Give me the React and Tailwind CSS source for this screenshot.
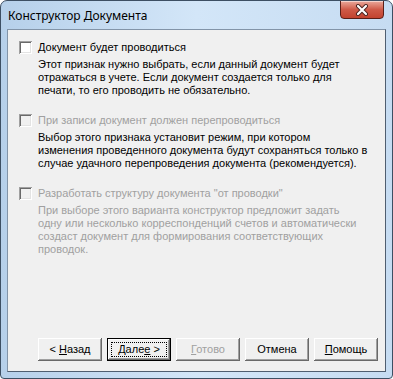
import React from 'react'

const sans = { fontFamily: '"Liberation Sans", Arial, sans-serif' }

const CheckBox = ({ disabled }) => (
  <span
    className={`block w-[13px] h-[13px] shrink-0 shadow-[inset_1px_1px_#a0a0a0,inset_-1px_-1px_#ffffff,inset_2px_2px_#696969,inset_-2px_-2px_#e3e3e3] ${
      disabled ? 'bg-[#f0f0f0]' : 'bg-white'
    }`}
  />
)

const Option = ({ label, disabled, grayText, lines }) => (
  <div className="flex flex-col">
    <div className="flex items-center h-[13px] pl-[11px]">
      <CheckBox disabled={disabled} />
      <span className={`ml-[6px] text-[11px] leading-[13px] ${disabled ? 'text-[#a0a0a0]' : 'text-black'}`}>
        {label}
      </span>
    </div>
    <div
      className={`mt-[4px] pl-[30px] text-[11px] leading-[13px] whitespace-nowrap ${
        grayText ? 'text-[#a0a0a0]' : 'text-black'
      }`}
    >
      {lines.map((l, i) => (
        <div key={i}>{l}</div>
      ))}
    </div>
  </div>
)

const WinButton = ({ children, isDefault, disabled }) => (
  <div
    className={`w-[64px] h-[23px] flex items-center justify-center ${
      isDefault ? 'border border-black' : ''
    }`}
  >
    <div className="relative w-full h-full flex items-center justify-center bg-[#f0f0f0] shadow-[inset_-1px_-1px_#696969,inset_1px_1px_#ffffff,inset_-2px_-2px_#a0a0a0,inset_2px_2px_#f0f0f0]">
      {isDefault && (
        <span className="absolute inset-[3px] border border-dotted border-black" />
      )}
      <span className={`text-[11px] leading-[13px] ${disabled ? 'text-[#a0a0a0]' : 'text-black'}`}>
        {children}
      </span>
    </div>
  </div>
)

export default function App() {
  return (
    <div className="w-[393px] h-[379px] bg-white">
      <div className="w-full h-full flex flex-col border border-[#3d4f63] rounded-t-[7px] rounded-b-[4px] bg-gradient-to-r from-[#b6d0ea] via-[#d3e6f8] to-[#c6dcf2] px-[6px] pb-[6px] overflow-hidden">
        {/* Title bar */}
        <div className="relative h-[28px] shrink-0 flex items-center">
          <span
            className="pl-[1px] pt-[1px] text-[12px] text-black"
            style={{ fontFamily: '"Noto Sans", "Open Sans", sans-serif' }}
          >
            Конструктор Документа
          </span>
          <div className="absolute right-[2px] top-[-1px] w-[44px] h-[19px] rounded-b-[4px] border border-[#5a1f18] bg-gradient-to-b from-[#e9a99c] via-[#cf5a48] to-[#c2432f] flex items-center justify-center shadow-[inset_0_1px_0_rgba(255,255,255,0.5)]">
            <svg width="14" height="12" viewBox="0 0 14 12">
              <path d="M3 2 L11 10 M11 2 L3 10" stroke="#4a2420" strokeWidth="4" strokeLinecap="round" />
              <path d="M3 2 L11 10 M11 2 L3 10" stroke="#ffffff" strokeWidth="2.2" strokeLinecap="round" />
            </svg>
          </div>
        </div>

        {/* Client area */}
        <div
          className="flex-1 flex flex-col bg-[#f0f0f0] border border-t-[#8294a8] border-l-[#8294a8] border-r-[#4f5e70] border-b-[#4f5e70] pt-[11px]"
          style={sans}
        >
          <div className="flex flex-col gap-[17px]">
            <Option
              label="Документ будет проводиться"
              lines={[
                'Этот признак нужно выбрать, если данный документ будет',
                'отражаться в учете. Если документ создается только для',
                'печати, то его проводить не обязательно.',
              ]}
            />
            <Option
              label="При записи документ должен перепроводиться"
              disabled
              lines={[
                'Выбор этого признака установит режим, при котором',
                'изменения проведенного документа будут сохраняться только в',
                'случае удачного перепроведения документа (рекомендуется).',
              ]}
            />
            <Option
              label={'Разработать структуру документа "от проводки"'}
              disabled
              grayText
              lines={[
                'При выборе этого варианта конструктор предложит задать',
                'одну или несколько корреспонденций счетов и автоматически',
                'создаст документ для формирования соответствующих',
                'проводок.',
              ]}
            />
          </div>

          <div className="mt-auto flex justify-end gap-[5px] pr-[7px] pb-[10px]">
            <WinButton>
              &lt; <span className="underline underline-offset-1">Н</span>азад
            </WinButton>
            <WinButton isDefault>
              Дале<span className="underline underline-offset-1">е</span> &gt;
            </WinButton>
            <WinButton disabled>
              <span className="underline underline-offset-1">Г</span>отово
            </WinButton>
            <WinButton>Отмена</WinButton>
            <WinButton>
              <span className="underline underline-offset-1">П</span>омощь
            </WinButton>
          </div>
        </div>
      </div>
    </div>
  )
}
